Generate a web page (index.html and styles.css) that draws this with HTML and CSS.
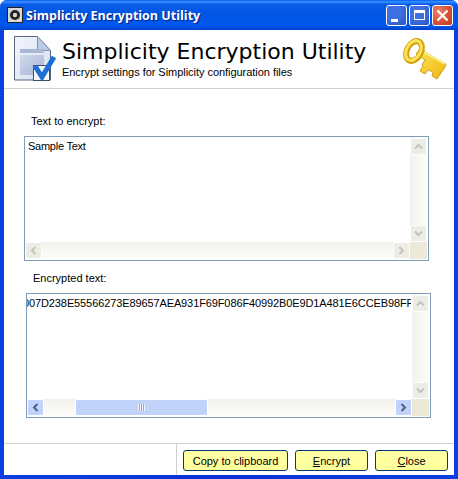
FILE: index.html
```html
<!DOCTYPE html>
<html lang="en">
<head>
  <meta charset="UTF-8" />
  <title>Simplicity Encryption Utility</title>
  <link rel="stylesheet" href="styles.css">
</head>
<body>
  <div class="window">
    <div class="titlebar">
      <svg class="app-icon" width="16" height="16" viewBox="0 0 16 16">
        <rect x="0.5" y="0.5" width="15" height="15" fill="#d8d8d8" stroke="#222"/>
        <circle cx="8" cy="8" r="5" fill="#222"/>
        <circle cx="8" cy="8" r="2.2" fill="#d8d8d8"/>
      </svg>
      <span class="title-text">Simplicity Encryption Utility</span>
      <div class="caption-btns">
        <div class="cap-btn"><span class="min-glyph"></span></div>
        <div class="cap-btn"><span class="max-glyph"></span></div>
        <div class="cap-btn close">
          <svg width="13" height="13" viewBox="0 0 13 13"><path d="M1.5 1.5l10 10M11.5 1.5l-10 10" stroke="#fff" stroke-width="2.2"/></svg>
        </div>
      </div>
    </div>

    <div class="client">
      <div class="header">
        <svg class="doc-icon" width="52" height="56" viewBox="0 0 52 56">
          <defs>
            <linearGradient id="docfill" x1="0" y1="0" x2="1" y2="1">
              <stop offset="0" stop-color="#f2f5fc"/>
              <stop offset="1" stop-color="#d5def0"/>
            </linearGradient>
            <linearGradient id="blockfill" x1="0" y1="0" x2="1" y2="1">
              <stop offset="0" stop-color="#d3daee"/>
              <stop offset="1" stop-color="#a6b3d6"/>
            </linearGradient>
          </defs>
          <path d="M6.500 6.500h23l13 14v29.500h-36z" fill="url(#docfill)" stroke="#59657f"/>
          <path d="M29.500 6.500v14h13z" fill="#bccbe8" stroke="#8492ae"/>
          <rect x="12" y="19" width="24" height="4" fill="#a9b6d6"/>
          <rect x="12" y="25" width="24" height="20" fill="url(#blockfill)"/>
          <rect x="25.500" y="35.500" width="16" height="15" fill="#f5f6fa" stroke="#454c60"/>
          <path d="M27 36l7 11L46 27" fill="none" stroke="#1a6ed6" stroke-width="5"/>
        </svg>
        <div class="header-text">
          <h1>Simplicity Encryption Utility</h1>
          <p>Encrypt settings for Simplicity configuration files</p>
        </div>
        <svg class="key-icon" width="52" height="56" viewBox="0 0 52 56">
          <defs>
            <linearGradient id="keyfill" x1="0" y1="0" x2="1" y2="1">
              <stop offset="0" stop-color="#fde75c"/>
              <stop offset="1" stop-color="#eeb40c"/>
            </linearGradient>
          </defs>
          <path d="M22 19l26 15-1 3-8 12-5-3 1-4-5-2-3 4-5-3 3-5-1-1 3-5-9-6z" fill="url(#keyfill)" stroke="#c28f0a" stroke-width="0.8"/>
          <path d="M24 21l23 13" stroke="#fdf59a" stroke-width="1.5" fill="none"/>
          <ellipse cx="16" cy="21" rx="7" ry="10.500" transform="rotate(28 16 21)" fill="none" stroke="#d6a00c" stroke-width="6"/>
          <ellipse cx="15.500" cy="20.500" rx="7" ry="10.500" transform="rotate(28 15.500 20.500)" fill="none" stroke="#fbe25a" stroke-width="3"/>
        </svg>
      </div>

      <div class="body">
        <div class="label first">Text to encrypt:</div>
        <div class="textbox">
          <div class="text-content sample">Sample Text</div>
          <div class="vbar">
            <div class="sb-btn"><svg width="9" height="7" viewBox="0 0 9 7"><path d="M1 5.500l3.500-3.500L8 5.500" fill="none" stroke="#c4c3b8" stroke-width="2"/></svg></div>
            <div class="sb-track"></div>
            <div class="sb-btn"><svg width="9" height="7" viewBox="0 0 9 7"><path d="M1 1.500L4.500 5 8 1.500" fill="none" stroke="#c4c3b8" stroke-width="2"/></svg></div>
          </div>
          <div class="hbar">
            <div class="sb-btn"><svg width="7" height="9" viewBox="0 0 7 9"><path d="M5.500 1L2 4.500 5.500 8" fill="none" stroke="#c4c3b8" stroke-width="2"/></svg></div>
            <div class="sb-track"></div>
            <div class="sb-btn"><svg width="7" height="9" viewBox="0 0 7 9"><path d="M1.500 1L5 4.500 1.500 8" fill="none" stroke="#c4c3b8" stroke-width="2"/></svg></div>
          </div>
          <div class="sb-corner"></div>
        </div>

        <div class="label second">Encrypted text:</div>
        <div class="textbox output">
          <div class="text-content scrolled"><span>007D238E55566273E89657AEA931F69F086F40992B0E9D1A481E6CCEB98FF</span></div>
          <div class="vbar">
            <div class="sb-btn"><svg width="9" height="7" viewBox="0 0 9 7"><path d="M1 5.500l3.500-3.500L8 5.500" fill="none" stroke="#c4c3b8" stroke-width="2"/></svg></div>
            <div class="sb-track"></div>
            <div class="sb-btn"><svg width="9" height="7" viewBox="0 0 9 7"><path d="M1 1.500L4.500 5 8 1.500" fill="none" stroke="#c4c3b8" stroke-width="2"/></svg></div>
          </div>
          <div class="hbar">
            <div class="sb-btn active"><svg width="7" height="9" viewBox="0 0 7 9"><path d="M5.500 1L2 4.500 5.500 8" fill="none" stroke="#4d6185" stroke-width="2"/></svg></div>
            <div class="sb-track">
              <div class="thumb"><span class="grip"></span></div>
            </div>
            <div class="sb-btn active"><svg width="7" height="9" viewBox="0 0 7 9"><path d="M1.500 1L5 4.500 1.500 8" fill="none" stroke="#4d6185" stroke-width="2"/></svg></div>
          </div>
          <div class="sb-corner"></div>
        </div>
      </div>

      <div class="footer">
        <div class="footer-spacer"></div>
        <div class="footer-btns">
          <button class="btn copy">Copy to clipboard</button>
          <button class="btn encrypt"><u>E</u>ncrypt</button>
          <button class="btn close-btn"><u>C</u>lose</button>
        </div>
      </div>
    </div>
  </div>
</body>
</html>
```

FILE: styles.css
```css
html, body {
  margin: 0;
  padding: 0;
  background: #fff;
}
body {
  font-family: "Liberation Sans", Arial, sans-serif;
  font-size: 11px;
  color: #000;
}
.window {
  width: 458px;
  height: 479px;
  box-sizing: border-box;
  display: flex;
  flex-direction: column;
  background: linear-gradient(to right, #0a3fe0, #0831d9 50%, #0a3fe0);
  border-radius: 7px 7px 0 0;
  overflow: hidden;
}
.titlebar {
  height: 30px;
  flex: none;
  display: flex;
  align-items: center;
  padding: 0 5px 0 7px;
  box-sizing: border-box;
  background: linear-gradient(to bottom, #0058ee 0, #3a93ff 6%, #0a5ce8 14%, #0055e5 50%, #0058ee 85%, #0043cf 100%);
}
.app-icon {
  margin-right: 3px;
  flex: none;
}
.title-text {
  font-family: "Open Sans", sans-serif;
  font-weight: 700;
  font-size: 12.5px;
  color: #fff;
  text-shadow: 1px 1px 1px #0f1f8c;
  flex: 1;
}
.caption-btns {
  display: flex;
  gap: 2px;
}
.cap-btn {
  width: 21px;
  height: 21px;
  box-sizing: border-box;
  border: 1px solid #fff;
  border-radius: 3px;
  background: radial-gradient(circle at 30% 30%, #3c6ee6 0, #3f70e0 40%, #2a55cc 100%);
  display: flex;
  align-items: center;
  justify-content: center;
}
.cap-btn.close {
  background: radial-gradient(circle at 30% 30%, #e8866c 0, #d9543a 50%, #bd3a1e 100%);
}
.min-glyph {
  width: 7px;
  height: 3px;
  background: #fff;
  align-self: flex-end;
  margin: 0 5px 3px 0;
}
.max-glyph {
  width: 11px;
  height: 10px;
  box-sizing: border-box;
  border: 1px solid #fff;
  border-top-width: 3px;
}
.client {
  flex: 1;
  margin: 0 4px 4px;
  background: #fff;
  display: flex;
  flex-direction: column;
  min-height: 0;
}
.header {
  height: 59px;
  flex: none;
  box-sizing: border-box;
  border-bottom: 1px solid #d0d0d0;
  display: flex;
  align-items: flex-start;
  padding: 0 4px;
}
.doc-icon {
  flex: none;
  margin-right: 2px;
}
.header-text {
  flex: 1;
  padding-top: 9px;
}
.header-text h1 {
  margin: 0;
  font-family: "DejaVu Sans", sans-serif;
  font-weight: 400;
  font-size: 22px;
  line-height: 26px;
}
.header-text p {
  margin: 0;
  line-height: 14px;
  letter-spacing: -0.04px;
}
.key-icon {
  flex: none;
}
.body {
  flex: 1;
  display: flex;
  flex-direction: column;
  padding: 0 0 0 20px;
}
.label {
  line-height: 14px;
}
.label.first {
  margin: 25px 0 8px 7px;
}
.label.second {
  margin: 10px 0 8px 9px;
}
.textbox {
  width: 405px;
  height: 125px;
  box-sizing: border-box;
  border: 1px solid #7f9db9;
  display: grid;
  grid-template-columns: 1fr 17px;
  grid-template-rows: 1fr 17px;
  background: #fff;
  padding: 0 1px 1px 0;
}
.textbox.output {
  margin-left: 2px;
}
.text-content {
  padding: 2px 0 0 3px;
  line-height: 14px;
  overflow: hidden;
  min-width: 0;
  white-space: nowrap;
}
.sample {
  letter-spacing: -0.25px;
}
.scrolled {
  padding-left: 0;
  margin-right: 1px;
}
.scrolled span {
  display: block;
  text-indent: -4px;
  letter-spacing: -0.11px;
}
.vbar {
  display: flex;
  flex-direction: column;
  background: linear-gradient(to right, #f3f1ec, #fdfdfa);
  padding-top: 1px;
}
.hbar {
  display: flex;
  background: linear-gradient(to bottom, #f3f1ec, #fdfdfa);
}
.sb-track {
  flex: 1;
  min-width: 0;
}
.sb-btn {
  width: 17px;
  height: 17px;
  flex: none;
  box-sizing: border-box;
  border: 1px solid #fff;
  border-radius: 2px;
  background: #eeede5;
  display: flex;
  align-items: center;
  justify-content: center;
}
.sb-btn.active {
  background: #c1d2fb;
}
.sb-corner {
  background: #ece9d8;
}
.thumb {
  width: 133px;
  height: 100%;
  box-sizing: border-box;
  margin-left: 31px;
  border: 1px solid #fff;
  border-radius: 2px;
  background: #c1d2fb;
  display: flex;
  align-items: center;
  justify-content: center;
}
.grip {
  width: 7px;
  height: 7px;
  background: repeating-linear-gradient(to right, #eef4fe 0 1px, #8ca8e4 1px 2px);
}
.footer {
  height: 32px;
  flex: none;
  box-sizing: border-box;
  border-top: 1px solid #d0d0d0;
  display: flex;
}
.footer-spacer {
  width: 172px;
  flex: none;
  border-right: 1px solid #d0d0d0;
}
.footer-btns {
  display: flex;
  align-items: flex-start;
  padding: 6px 0 0 6px;
  gap: 7px;
}
.btn {
  height: 21px;
  box-sizing: border-box;
  border: 1px solid #003c74;
  border-radius: 3px;
  background: linear-gradient(to bottom, #ffffa8, #ffff99);
  font-family: "Liberation Sans", Arial, sans-serif;
  font-size: 11px;
  color: #000;
  padding: 0;
}
.copy { width: 105px; }
.encrypt { width: 73px; }
.close-btn { width: 73px; }
```
